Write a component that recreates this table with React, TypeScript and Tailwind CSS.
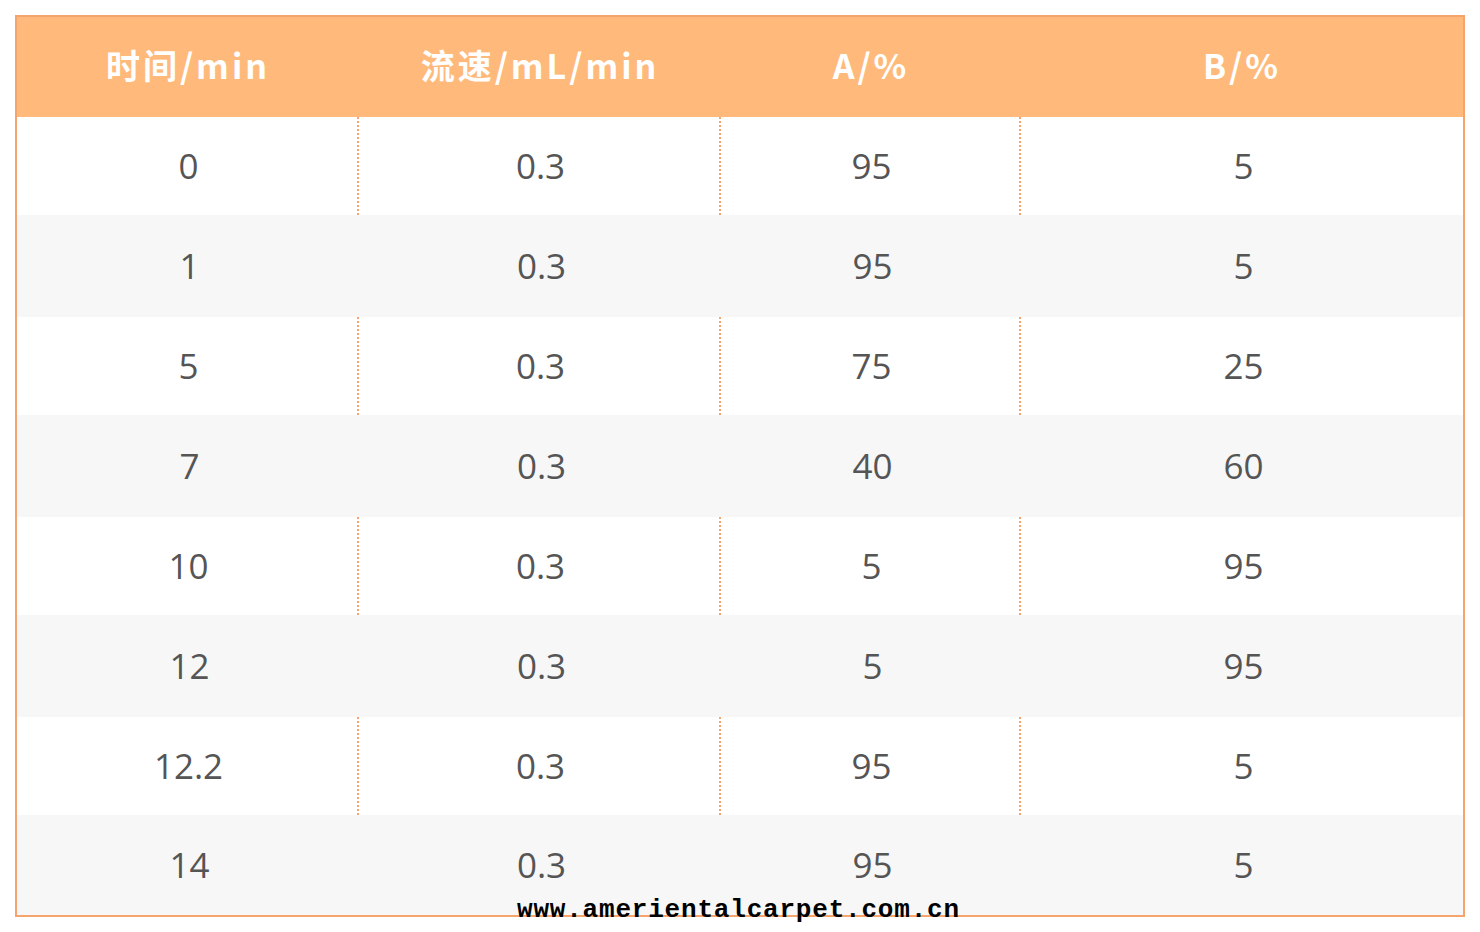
const headers = ['时间/min', '流速/mL/min', 'A/%', 'B/%'];

const rows = [
  ['0', '0.3', '95', '5'],
  ['1', '0.3', '95', '5'],
  ['5', '0.3', '75', '25'],
  ['7', '0.3', '40', '60'],
  ['10', '0.3', '5', '95'],
  ['12', '0.3', '5', '95'],
  ['12.2', '0.3', '95', '5'],
  ['14', '0.3', '95', '5'],
];

const cols = 'grid grid-cols-[342px_362px_300px_442px]';

export default function App() {
  return (
    <div className="min-h-screen w-full bg-white pt-[15px] pl-[15px]">
      <div className="relative w-[1450px] border-2 border-[#f6a46e]">
        <div className={`${cols} h-[100px] bg-[#ffb97a]`}>
          {headers.map((h) => (
            <div
              key={h}
              className="flex items-center justify-center pb-[6px] text-[34px] font-bold tracking-[3px] text-white [font-family:'Noto_Sans_CJK_SC',sans-serif]"
            >
              {h}
            </div>
          ))}
        </div>

        {rows.map((row, i) => {
          const striped = i % 2 === 1;
          const last = i === rows.length - 1;
          return (
            <div
              key={i}
              className={`${cols} ${
                striped ? 'bg-[#f7f7f7]' : 'bg-white'
              } ${striped ? (last ? 'h-[100px]' : 'h-[102px]') : 'h-[98px]'}`}
            >
              {row.map((cell, j) => (
                <div
                  key={j}
                  className={`flex items-center justify-center pl-[3px] text-[35px] font-[370] text-[#555] [font-family:'Open_Sans',sans-serif] ${
                    !striped && j < 3 ? 'border-r-2 border-dotted border-[#f6a46e]' : ''
                  }`}
                >
                  {cell}
                </div>
              ))}
            </div>
          );
        })}

        {/* watermark */}
        <div className="absolute bottom-[-8px] left-[500px] text-[26px] font-bold leading-none tracking-[0.8px] text-black [font-family:'Liberation_Mono',monospace]">
          www.amerientalcarpet.com.cn
        </div>
      </div>
    </div>
  );
}
